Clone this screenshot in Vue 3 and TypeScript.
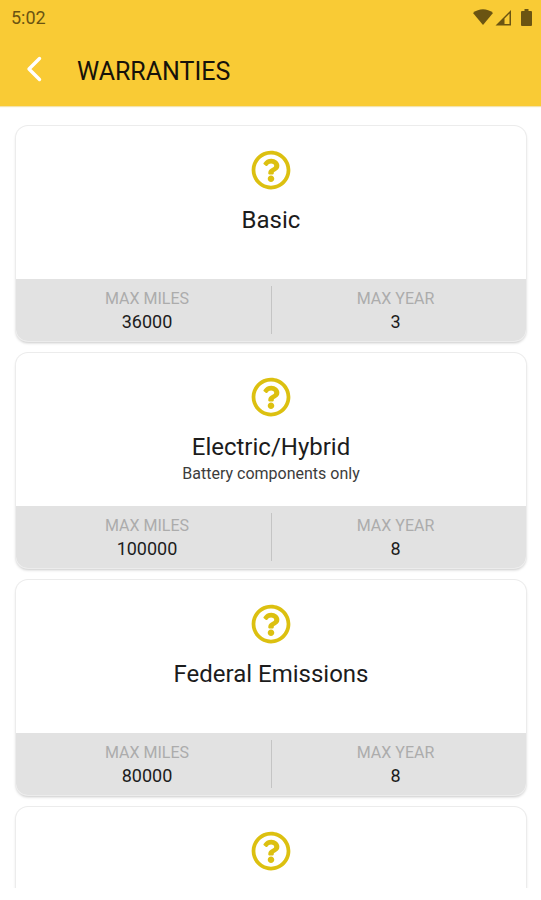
<script setup lang="ts">
interface Warranty {
  name: string
  note?: string
  miles: number
  years: number
}

const warranties: Warranty[] = [
  { name: 'Basic', miles: 36000, years: 3 },
  { name: 'Electric/Hybrid', note: 'Battery components only', miles: 100000, years: 8 },
  { name: 'Federal Emissions', miles: 80000, years: 8 },
  { name: '', miles: 0, years: 0 },
]
</script>

<template>
  <div class="app">
    <header class="header">
      <div class="status">
        <span>5:02</span>
        <div class="status-icons">
          <svg width="20" height="17" viewBox="0 0 20 17" aria-hidden="true">
            <path d="M0 4C6-1 14-1 20 4L10 16z" fill="currentColor" />
          </svg>
          <svg width="17" height="17" viewBox="0 0 17 17" aria-hidden="true">
            <path d="M16 1V16.500H0.500zM14.500 4.600L9.500 9.600V15H14.500z" fill="currentColor" fill-rule="evenodd" />
          </svg>
          <svg class="battery" width="11" height="17" viewBox="0 0 11 17" aria-hidden="true">
            <path d="M3.500 0h4v2H10a1 1 0 0 1 1 1v13a1 1 0 0 1-1 1H1a1 1 0 0 1-1-1V3a1 1 0 0 1 1-1h2.500z" fill="currentColor" />
          </svg>
        </div>
      </div>
      <div class="toolbar">
        <button class="back" type="button" aria-label="Back">
          <svg width="16" height="26" viewBox="0 0 16 26" aria-hidden="true">
            <path d="M13.500 2.500L3 13L13.500 23.500" fill="none" stroke="#fff" stroke-width="3.400" stroke-linecap="round" stroke-linejoin="round" />
          </svg>
        </button>
        <h1>WARRANTIES</h1>
      </div>
    </header>

    <main class="list">
      <article v-for="(item, index) in warranties" :key="index" class="card">
        <div class="summary">
          <svg class="icon" width="40" height="40" viewBox="0 0 512 512" aria-hidden="true">
            <path fill="currentColor" d="M256 8C119.043 8 8 119.083 8 256c0 136.997 111.043 248 248 248s248-111.003 248-248C504 119.083 392.957 8 256 8zm0 448c-110.532 0-200-89.431-200-200 0-110.495 89.472-200 200-200 110.491 0 200 89.471 200 200 0 110.530-89.431 200-200 200zm107.244-255.200c0 67.052-72.421 68.084-72.421 92.863V300c0 6.627-5.373 12-12 12h-45.647c-6.627 0-12-5.373-12-12v-8.659c0-35.745 27.100-50.034 47.579-61.516 17.561-9.845 28.324-16.541 28.324-29.579 0-17.246-21.999-28.693-39.784-28.693-23.189 0-33.894 10.977-48.942 29.969-4.057 5.120-11.460 6.071-16.666 2.124l-27.824-21.098c-5.107-3.872-6.251-11.066-2.644-16.363C184.846 131.491 214.940 112 261.794 112c49.071 0 101.450 38.304 101.450 88.800zM298 368c0 23.159-18.841 42-42 42s-42-18.841-42-42 18.841-42 42-42 42 18.841 42 42z" />
          </svg>
          <h2 v-if="item.name">{{ item.name }}</h2>
          <p v-if="item.note">{{ item.note }}</p>
        </div>
        <dl v-if="item.name" class="limits">
          <div class="limit">
            <dt>MAX MILES</dt>
            <dd>{{ item.miles }}</dd>
          </div>
          <div class="limit">
            <dt>MAX YEAR</dt>
            <dd>{{ item.years }}</dd>
          </div>
        </dl>
      </article>
    </main>
  </div>
</template>

<style>
body {
  margin: 0;
  background: #fff;
}
</style>

<style scoped>
.app {
  box-sizing: border-box;
  display: flex;
  flex-direction: column;
  height: 100vh;
  padding-bottom: 12px;
  font-family: Roboto, "Liberation Sans", sans-serif;
  color: #1c1c1c;
}

.header {
  flex: none;
  background: #f9cb35;
  box-shadow: 0 1px 1px #f3e3ae;
}

.status {
  display: flex;
  align-items: center;
  justify-content: space-between;
  height: 34px;
  padding: 0 9px 0 11px;
  font-size: 18px;
  color: #6b5412;
}

.status-icons {
  display: flex;
  align-items: center;
  gap: 2px;
}

.battery {
  margin-left: 7px;
}

.toolbar {
  display: flex;
  align-items: center;
  height: 72px;
  padding: 0 26px;
  gap: 35px;
}

.back {
  display: flex;
  padding: 0;
  border: 0;
  background: none;
  margin-bottom: 2px;
}

h1,
h2,
p,
dl,
dd {
  margin: 0;
  font-weight: 400;
}

h1 {
  padding-top: 3px;
  font-size: 25px;
  line-height: 32px;
  color: #16120a;
}

.list {
  flex: 1;
  min-height: 0;
  overflow: hidden;
  display: flex;
  flex-direction: column;
  gap: 12px;
  padding: 20px 15px 0 16px;
}

.card {
  flex: none;
  border-radius: 12px;
  background: #fff;
  box-shadow: 0 0 0 1px #ececec, 0 2px 3px #c8c8c8;
  overflow: hidden;
}

.summary {
  box-sizing: border-box;
  display: flex;
  flex-direction: column;
  align-items: center;
  height: 153px;
  padding-top: 24px;
}

.icon {
  color: #dcc010;
}

h2 {
  margin-top: 15px;
  font-size: 24px;
  line-height: 30px;
}

p {
  font-size: 16px;
  line-height: 24px;
  color: #3c3c3c;
}

.limits {
  display: grid;
  grid-template-columns: 1fr 1fr;
  padding: 7px;
  background: #e2e2e2;
}

.limit {
  padding-top: 2px;
  text-align: center;
}

.limit + .limit {
  border-left: 1px solid #c4c4c4;
}

dt {
  font-size: 16px;
  line-height: 22px;
  color: #acacac;
}

dd {
  font-size: 18px;
  line-height: 24px;
}
</style>
